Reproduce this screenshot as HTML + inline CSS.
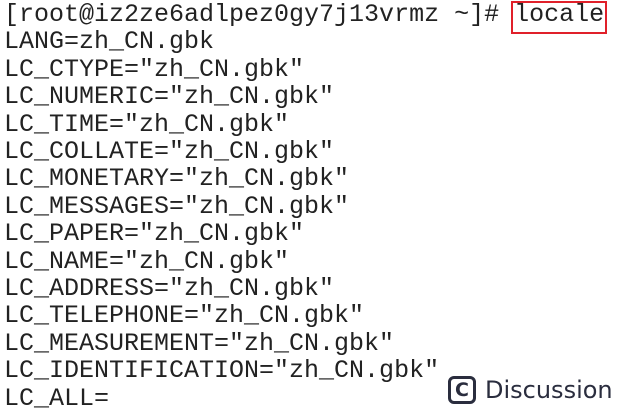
<!DOCTYPE html>
<html><head><style>
html,body{margin:0;padding:0;background:#fff;width:637px;height:416px;overflow:hidden}
pre{position:absolute;left:4px;top:1px;margin:0;font-family:"Liberation Mono",monospace;font-size:25px;line-height:27.4px;color:#222;letter-spacing:0}
.box{position:absolute;left:511px;top:1px;width:92px;height:29px;border:2px solid #e0202a}
.disc{position:absolute;left:448px;top:376px;font-family:"DejaVu Sans","Liberation Sans",sans-serif;font-size:24px;color:#2a2d3e;display:flex;align-items:center;height:28px}
.ic{width:28px;height:28px;border:3px solid #2a2d3e;border-radius:6px;box-sizing:border-box;display:inline-flex;align-items:center;justify-content:center;font-size:19px;font-weight:bold;margin-right:9px}
</style></head><body>
<pre>[root@iz2ze6adlpez0gy7j13vrmz ~]# locale
LANG=zh_CN.gbk
LC_CTYPE="zh_CN.gbk"
LC_NUMERIC="zh_CN.gbk"
LC_TIME="zh_CN.gbk"
LC_COLLATE="zh_CN.gbk"
LC_MONETARY="zh_CN.gbk"
LC_MESSAGES="zh_CN.gbk"
LC_PAPER="zh_CN.gbk"
LC_NAME="zh_CN.gbk"
LC_ADDRESS="zh_CN.gbk"
LC_TELEPHONE="zh_CN.gbk"
LC_MEASUREMENT="zh_CN.gbk"
LC_IDENTIFICATION="zh_CN.gbk"
LC_ALL=</pre>
<div class="box"></div>
<div class="disc"><span class="ic">C</span>Discussion</div>
</body></html>
